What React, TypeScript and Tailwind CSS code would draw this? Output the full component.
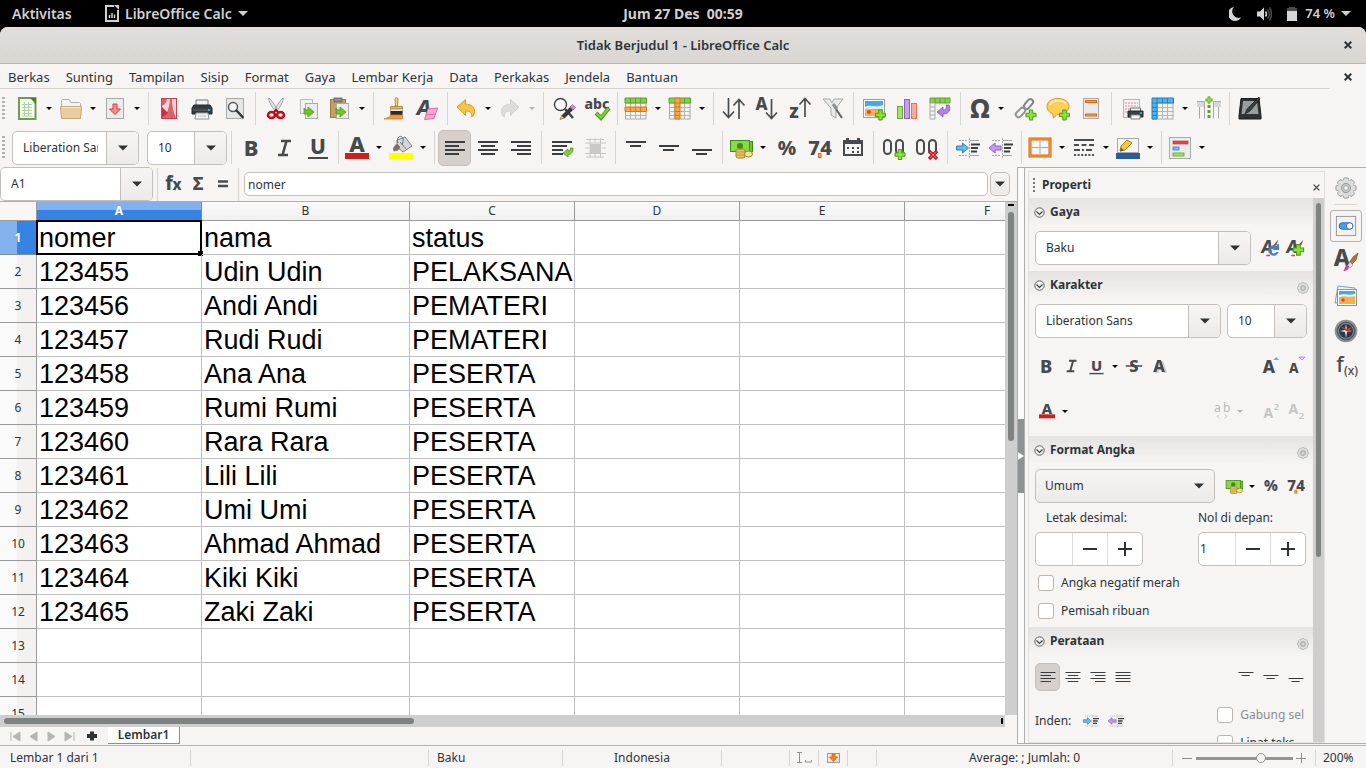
import React from "react";

type Kids = { children?: React.ReactNode };

const Ico = ({ children, s = 24 }: Kids & { s?: number }) => (
  <svg width={s} height={s} viewBox="0 0 24 24" fill="none" className="block shrink-0 overflow-visible" aria-hidden="true">
    {children}
  </svg>
);

const Glyph = ({ x = 12, y = 20, size = 20, weight = 800, fill = "#474a4c", italic = false, children }: Kids & {
  x?: number; y?: number; size?: number; weight?: number; fill?: string; italic?: boolean;
}) => (
  <text x={x} y={y} fontSize={size} fontWeight={weight} fill={fill} fontStyle={italic ? "italic" : "normal"} textAnchor="middle" fontFamily="'Noto Sans', sans-serif">
    {children}
  </text>
);

const Caret = ({ muted = false }: { muted?: boolean }) => (
  <svg width="6" height="3" viewBox="0 0 6 3" className="block" aria-hidden="true">
    <path d="M0 0h6L3 3z" fill={muted ? "#b4b4b4" : "#000"} />
  </svg>
);

const BigCaret = () => (
  <svg width="10" height="6" viewBox="0 0 10 6" className="block" aria-hidden="true">
    <path d="M0 .5h10L5 5.5z" fill="#2e3436" />
  </svg>
);

const Plus = ({ x, y, u = 1 }: { x: number; y: number; u?: number }) => (
  <path transform={`translate(${x} ${y}) scale(${u})`} d="M-1.7-5h3.4v3.3H5v3.4H1.7V5h-3.4V1.7H-5v-3.4h3.3z" fill="#8ae234" stroke="#4f9a17" strokeWidth="1" />
);

/* toolbar icons */
const NewSheet = () => (
  <Ico>
    <rect x="4" y="1" width="16.500" height="21" fill="#f6fbf1" stroke="#6f9b55" strokeWidth="2" />
    <path d="M15 1h6v6z" fill="#4d7a33" />
    <path d="M7 7.500h10M7 10.500h10M7 13.500h10M7 16.500h10M7 19h10M9.500 5v14M13.500 5v14" stroke="#b5cfa5" />
  </Ico>
);
const Folder = () => (
  <Ico>
    <path d="M2.500 21V3.500l1-1h7l1 3h9l1 1V21z" fill="#f4f4f3" stroke="#b0b0ae" />
    <path d="M1.500 9.500h21L21.500 21.500h-19z" fill="#e8cda3" stroke="#c9a775" />
    <path d="M2.500 10.500h19" stroke="#f7e8cd" />
  </Ico>
);
const Save = () => (
  <Ico>
    <rect x="3.500" y="1.500" width="17" height="20" fill="#ececec" stroke="#a6a8a8" />
    <path d="M10 7h4v5h3.500L12 17.500 6.500 12H10z" fill="#f58a8a" stroke="#d43b4b" />
  </Ico>
);
const Pdf = () => (
  <Ico>
    <rect x="4.500" y="1.500" width="15" height="20" fill="#d8636d" stroke="#c44450" />
    <path d="M5 21C10 17 12 13 13 2h-3C9 6 8 7 5 9zM15 2c0 6 1 13 4 19V2z" fill="#f5d3d5" />
    <path d="M5 10l6 6-6 5z" fill="#c8323f" />
  </Ico>
);
const Printer = () => (
  <Ico>
    <path d="M6 9V3h12v6" fill="#f2f2f2" stroke="#73797c" />
    <path d="M4 8h16l2 3v6H2v-6z" fill="#363b3f" stroke="#23272a" />
    <path d="M3 13h18" stroke="#5f666b" />
    <circle cx="19" cy="13" r="1" fill="#43c4d8" />
    <path d="M6 16h12l1 6H5z" fill="#f5f5f5" stroke="#909496" />
    <path d="M8 19h8" stroke="#bbb" />
  </Ico>
);
const Preview = () => (
  <Ico>
    <rect x="3.500" y="1.500" width="17" height="20" fill="#e5e6e6" stroke="#a9abab" />
    <circle cx="10" cy="10" r="4.500" fill="#f4f4f4" stroke="#555a5c" strokeWidth="1.500" />
    <path d="M13.500 13.500l6 6.500" stroke="#33373a" strokeWidth="2.500" strokeLinecap="round" />
  </Ico>
);
const Cut = () => (
  <Ico>
    <path d="M5 1c-1 3 3 9 6 13l2-2C11 8 7 3 5 1zM19 1c1 3-3 9-6 13l-2-2C13 8 17 3 19 1z" fill="#e2e5e5" stroke="#8a8f90" strokeWidth=".8" />
    <ellipse cx="7.500" cy="18" rx="3.500" ry="3" stroke="#c00d1c" strokeWidth="2.600" />
    <ellipse cx="16.500" cy="18" rx="3.500" ry="3" stroke="#c00d1c" strokeWidth="2.600" />
    <path d="M10 15l2-2 2 2" stroke="#a50c18" strokeWidth="2" />
  </Ico>
);
const GreenArrow = ({ x, y }: { x: number; y: number }) => (
  <path transform={`translate(${x} ${y})`} d="M0 0v6h4v3l6-5-6-5v3H1z" fill="#73c52b" stroke="#4b9612" strokeWidth=".8" />
);
const Copy = () => (
  <Ico>
    <rect x="3.500" y="2.500" width="12" height="14" fill="#f3f3f2" stroke="#b9bbbb" />
    <rect x="8.500" y="6.500" width="12" height="15" fill="#ebebea" stroke="#aaacac" />
    <GreenArrow x={7} y={11} />
  </Ico>
);
const Paste = () => (
  <Ico>
    <rect x="2.500" y="2.500" width="15" height="18" fill="#c79f63" stroke="#9d7a42" />
    <rect x="6" y="1" width="8" height="4" fill="#8d8f8e" stroke="#5e6060" strokeWidth=".8" />
    <rect x="8.500" y="6.500" width="12" height="15" fill="#ececeb" stroke="#aaacac" />
    <GreenArrow x={8} y={11} />
  </Ico>
);
const Brush = () => (
  <Ico>
    <path d="M13 1.500a2 2 0 0 1 3 0L15.500 9h-2z" fill="#f3d38c" stroke="#bb8c37" />
    <path d="M8.500 12V9.500h12V12z" fill="#e8b659" stroke="#bb8c37" />
    <path d="M8.500 12h12v4h-12z" fill="#e9e9e9" stroke="#999" strokeWidth=".7" />
    <path d="M8.500 14h12v4h-12z" fill="#2e2b28" />
    <path d="M8.500 18h12v4H2l5-2z" fill="#f2994a" stroke="#dc7a21" strokeWidth=".7" />
  </Ico>
);
const ClearFmt = () => (
  <Ico>
    <Glyph x={9} y={18} size={22} italic>A</Glyph>
    <path d="M13 12l9.500-1L19 21.500l-9.500 1z" fill="#f9a8cf" stroke="#e56aa5" strokeLinejoin="round" />
    <path d="M11 18l9.500-1" stroke="#e56aa5" />
  </Ico>
);
const Undo = ({ muted = false }: { muted?: boolean }) => (
  <Ico>
    <path
      transform={muted ? "matrix(-1 0 0 1 24 0)" : undefined}
      d="M3 10l8.500-7.500v4.700c6 0 9 3 9 7.300 0 2.500-1 4.500-3 5.500.8-4-1-6-6-6v4.500z"
      fill={muted ? "#dcdcdb" : "#f6c24a"} stroke={muted ? "#d0d0cf" : "#d49a22"} strokeLinejoin="round" />
  </Ico>
);
const Find = () => (
  <Ico>
    <circle cx="8.500" cy="7.500" r="6" fill="#fafafa" stroke="#3f4446" strokeWidth="1.400" />
    <path d="M13 12l8 9" stroke="#3f4446" strokeWidth="2.500" />
    <path d="M9 22l1-4L19 9l3 3-9 9z" fill="#383a3c" />
    <path d="M18 10l2.500-2.500 3 3L21 13z" fill="#c98bd0" stroke="#945c9b" strokeWidth=".6" />
    <path d="M8 22.500l1.500-4 3 2.500z" fill="#f0dd6b" stroke="#45401c" strokeWidth=".5" />
  </Ico>
);
const Spell = () => (
  <Ico>
    <Glyph y={12} size={14}>abc</Glyph>
    <path d="M11 16l5 5 8-10" stroke="#4d9a18" strokeWidth="4" />
    <path d="M11.500 16.500l4.500 4 7.500-9" stroke="#80d32f" strokeWidth="2" />
  </Ico>
);
const gridLines = "M6.500 1v21M11.500 1v21M16.500 1v21M1.500 6h21M1.500 10.500h21M1.500 14.500h21M1.500 18.500h21";
const RowIcon = () => (
  <Ico>
    <rect x="1.500" y="1.500" width="20.500" height="20.500" fill="#f2f3f2" stroke="#a9abaa" />
    <path d={gridLines} stroke="#b4b6b5" />
    <path d="M1 1h21.500v5H1z" fill="#86cf4d" stroke="#5ea02d" />
    <path d="M6.500 1v5M11.500 1v5M16.500 1v5" stroke="#5ea02d" />
    <path d="M1 10h21.500v4.500H1z" fill="#f9a646" stroke="#d97a14" />
    <path d="M6.500 10v4M11.500 10v4M16.500 10v4" stroke="#d97a14" />
  </Ico>
);
const ColIcon = () => (
  <Ico>
    <rect x="1.500" y="1.500" width="20.500" height="20.500" fill="#f2f3f2" stroke="#a9abaa" />
    <path d={gridLines} stroke="#b4b6b5" />
    <path d="M1 1h21.500v5H1z" fill="#86cf4d" stroke="#5ea02d" />
    <path d="M16.500 1v5" stroke="#5ea02d" />
    <path d="M7 1h5v21H7z" fill="#f9a646" stroke="#d97a14" />
    <path d="M7 6h5M7 10h5M7 14.500h5M7 18.500h5" stroke="#d97a14" />
  </Ico>
);
const ink = "#4a4d4f";
const Sort = () => (
  <Ico>
    <path d="M6.500 1v19M1 14.500l5.500 6 5.500-6M17 22V3M11.500 8.500l5.500-6 5.500 6" stroke={ink} strokeWidth="1.700" />
  </Ico>
);
const SortAsc = () => (
  <Ico>
    <Glyph x={6.5} y={13} size={17}>A</Glyph>
    <path d="M16.500 2v19M11 15.500l5.500 6 5.500-6" stroke={ink} strokeWidth="1.700" />
  </Ico>
);
const SortDesc = () => (
  <Ico>
    <Glyph x={6} y={21} size={19}>z</Glyph>
    <path d="M17 20V2M11.500 7.500l5.500-6 5.500 6" stroke={ink} strokeWidth="1.700" />
  </Ico>
);
const Filter = () => (
  <Ico>
    <path d="M2 2h7l2 4 2-4h9l-7 9v10l-5-3v-7z" fill="#e9eaea" stroke="#a4a8a8" />
    <path d="M13 9l8 12" stroke="#5d6263" strokeWidth="2" />
    <path d="M12 7l4 5" stroke="#8d9293" strokeWidth="3" />
  </Ico>
);
const Picture = () => (
  <Ico>
    <rect x="1.500" y="2.500" width="21" height="18" fill="#fdfdfd" stroke="#9c9fa0" />
    <rect x="3" y="4" width="18" height="9" fill="#46a9e6" />
    <path d="M3 10c5-3 9 1 18-2v4H3z" fill="#d9effa" />
    <path d="M3 12c6-1 9 2 18 0v7H3z" fill="#f7b04e" />
    <circle cx="7" cy="15" r="2" fill="#e4472b" />
    <Plus x={18.5} y={18} />
  </Ico>
);
const Chart = () => (
  <Ico>
    <rect x="2.500" y="9.500" width="5" height="12" fill="#a6e36d" stroke="#67ad2f" />
    <rect x="9.500" y="2.500" width="5" height="19" fill="#c79df0" stroke="#9360c9" />
    <rect x="16.500" y="6.500" width="5" height="15" fill="#f7a99a" stroke="#df7565" />
  </Ico>
);
const Pivot = () => (
  <Ico>
    <path d="M2 1h20v5H2z" fill="#86cf4d" stroke="#5ea02d" />
    <path d="M7 1v5M12 1v5M17 1v5" stroke="#5ea02d" />
    <path d="M2 6h5v16H2zM2 10h5M2 14h5M2 18h5" fill="#f2f3f2" stroke="#a9abaa" />
    <path d="M9 15l6-5v3c3 0 4-2 3-5h3c2 5 0 9-6 9v3z" fill="#b184e3" stroke="#8450be" strokeWidth=".8" strokeLinejoin="round" />
  </Ico>
);
const Omega = () => (
  <Ico><Glyph x={13} y={21} size={26}>Ω</Glyph></Ico>
);
const Link = () => (
  <Ico>
    <rect x="-5.500" y="-2.800" width="11" height="5.600" rx="2.800" transform="translate(15.500 7) rotate(-50)" stroke="#7f8485" strokeWidth="2" />
    <rect x="-5.500" y="-2.800" width="11" height="5.600" rx="2.800" transform="translate(7.500 15.500) rotate(-45)" stroke="#8f9495" strokeWidth="2" />
    <Plus x={18} y={18} />
  </Ico>
);
const Comment = () => (
  <Ico>
    <path d="M12 1.500c7 0 11 3.500 11 8s-4 8-11 8l-1-.1-3.500 3.800-.8-4.500C3 15.500 1 13 1 9.500c0-4.500 4-8 11-8z" fill="#fbce58" stroke="#d89c26" />
    <path d="M4 8c1-3 4-4.500 8-4.500s7 1.500 8 4" stroke="#fde9a9" strokeWidth="2" />
    <Plus x={18.5} y={18} />
  </Ico>
);
const HeaderFooter = () => (
  <Ico>
    <rect x="4.500" y="1.500" width="15" height="20" fill="#e9eaea" stroke="#a9abab" />
    <rect x="6.500" y="3.500" width="11" height="2" fill="#fba45c" stroke="#d9660a" />
    <rect x="6.500" y="17" width="11" height="2" fill="#fba45c" stroke="#d9660a" />
  </Ico>
);
const PrintArea = () => (
  <Ico>
    <rect x="3.500" y="2.500" width="16" height="18" fill="#f3f3f3" stroke="#b3b5b5" />
    <path d="M5 6h13M5 9h13M5 12h13M5 15h5" stroke="#c88a93" strokeDasharray="2 1" />
    <path d="M10.500 11h10v4h-10z" fill="#f4f4f4" stroke="#6c7072" />
    <path d="M8 14h15v6H8z" fill="#3a3f42" stroke="#25292b" />
    <path d="M11 18h9v4h-9z" fill="#fafafa" stroke="#7c8082" />
    <circle cx="21" cy="16" r="1" fill="#43c4d8" />
  </Ico>
);
const Freeze = () => (
  <Ico>
    <rect x="1.500" y="1.500" width="20.500" height="20.500" fill="#f2f3f2" stroke="#a9abaa" />
    <path d={gridLines} stroke="#b4b6b5" />
    <path d="M1 1h21.500v5H6v16H1z" fill="#57b0ea" stroke="#1f7fc0" />
    <path d="M6 6V1M11.500 6V1M16.500 6V1M1 10.500h5M1 14.500h5M1 18.500h5M1 6h5" stroke="#1f7fc0" />
  </Ico>
);
const Split = () => (
  <Ico>
    <path d="M0 4.500h7.500v17M2.500 4.500v17M24 4.500h-7.500v17M21.500 4.500v17" stroke="#a6a9a9" />
    <rect x="0" y="5" width="7" height="5" fill="#d7d9d9" />
    <rect x="17" y="5" width="7" height="5" fill="#d7d9d9" />
    <path d="M12 8v14" stroke="#5aa526" strokeWidth="3" strokeDasharray="3 2" />
    <Plus x={12} y={3} u={0.65} />
  </Ico>
);
const Tablet = () => (
  <Ico>
    <path d="M3 1.500h18l2 17v3.500H1v-3.500z" fill="#2f3133" stroke="#1c1d1e" />
    <path d="M5 4h14l1.500 13h-17z" fill="#9a9d9e" />
    <path d="M21 0L9 12l-2 5 5-3L22 2z" fill="#3a3c3d" stroke="#111" strokeWidth=".6" />
  </Ico>
);

const BoldG = ({ s = 24 }: { s?: number }) => <Ico s={s}><Glyph x={11} y={20} size={22}>B</Glyph></Ico>;
const ItalicG = ({ s = 24 }: { s?: number }) => (
  <Ico s={s}><path d="M8 5h10M5 19h10M13.500 5l-4 14" stroke="#474a4c" strokeWidth="2.600" /></Ico>
);
const UnderG = ({ s = 24 }: { s?: number }) => (
  <Ico s={s}><Glyph y={18} size={21}>U</Glyph><path d="M2 22h20" stroke="#474a4c" strokeWidth="2" /></Ico>
);
const ColorG = ({ s = 24 }: { s?: number }) => (
  <Ico s={s}><rect x="0" y="17" width="24" height="6" fill="#c9211e" /><Glyph y={16} size={22}>A</Glyph></Ico>
);
const Bucket = () => (
  <Ico>
    <path d="M8 4l8-3 7 9-9 6-6-5z" fill="#d5d8da" stroke="#7d8284" />
    <path d="M11 6l7 8M8 8c-3 2-4 4-3 7l4-1 2-3z" stroke="#777c7e" fill="#8d6a55" />
    <path d="M9 7c-2-5 2-8 4-6s1 5 0 8" stroke="#6a6f71" />
    <rect x="0" y="17" width="24" height="6" fill="#ff0" />
  </Ico>
);

type LineSet = [number, number][];
const Lines = ({ rows, y0, s = 24, w = 2, gap = 4 }: { rows: LineSet; y0: number; s?: number; w?: number; gap?: number }) => (
  <Ico s={s}>
    {rows.map(([a, b], i) => (
      <path key={i} d={`M${a} ${y0 + i * gap}H${b}`} stroke="#3b3e40" strokeWidth={w} />
    ))}
  </Ico>
);
const leftRows: LineSet = [[2, 22], [2, 16], [2, 22], [2, 16]];
const centerRows: LineSet = [[2, 22], [5, 19], [2, 22], [5, 19]];
const rightRows: LineSet = [[2, 22], [8, 22], [2, 22], [8, 22]];
const fullRows: LineSet = [[2, 22], [2, 22], [2, 22], [2, 22]];
const twoRows: LineSet = [[2, 22], [6, 17]];

const Wrap = () => (
  <Ico>
    <path d="M2 6h20M2 10h15M2 14h11M2 18h11" stroke="#3b3e40" strokeWidth="2" />
    <path d="M13 17l5-4v2c2 0 2.500-1 2.500-3H23c0 4-1.500 6.500-5 6.500v2.500z" fill="#80cf3d" stroke="#4f9a1d" strokeWidth=".8" />
  </Ico>
);
const MergeG = () => (
  <Ico>
    <rect x="7" y="8" width="11" height="9" fill="#c9c9c8" />
    <path d="M7 2v20M12 2v4M12 18v4M17.500 2v20M2 7h21M2 12h4M19 12h4M2 17.500h21M3 3.500h18M3 21h18" stroke="#c7c7c6" />
  </Ico>
);
const Money = ({ s = 24 }: { s?: number }) => (
  <Ico s={s}>
    <rect x="4.500" y="5.500" width="19" height="10" fill="#73c336" stroke="#3f8c12" />
    <rect x="1.500" y="4.500" width="19" height="11" fill="#8ad84f" stroke="#3f8c12" />
    <circle cx="11" cy="10" r="3" fill="#3f8c12" />
    <rect x="7" y="13" width="9" height="9" rx="2" fill="#e9c765" stroke="#a5802a" />
    <path d="M8 16h7M8 19h7" stroke="#b48f35" />
    <ellipse cx="19.500" cy="18" rx="4" ry="3" fill="#f5e194" stroke="#a5802a" />
  </Ico>
);
const Percent = ({ s = 24 }: { s?: number }) => <Ico s={s}><Glyph y={19} size={20}>%</Glyph></Ico>;
const Number74 = ({ s = 24 }: { s?: number }) => (
  <Ico s={s}>
    <Glyph x={6} y={19} size={20}>7</Glyph>
    <Glyph x={18} y={19} size={20}>4</Glyph>
    <rect x="10.500" y="17.500" width="2.500" height="4" fill="#f8b27a" stroke="#e2620f" />
  </Ico>
);
const Calendar = () => (
  <Ico>
    <rect x="3" y="6" width="18" height="13" stroke="#474a4c" strokeWidth="2" />
    <path d="M2 4h20v4H2zM5 2h3v4H5zM16 2h3v4h-3z" fill="#474a4c" />
    <path d="M6 12h2M11 12h2M16 12h2M11 16h2M16 16h2" stroke="#474a4c" strokeWidth="2" />
  </Ico>
);
const Zeros = () => (
  <>
    <rect x="2" y="4" width="7" height="14" rx="3.500" stroke={ink} strokeWidth="2" />
    <rect x="14" y="4" width="7" height="14" rx="3.500" stroke={ink} strokeWidth="2" />
  </>
);
const AddDec = () => <Ico><Zeros /><Plus x={18} y={18.500} /></Ico>;
const DelDec = () => (
  <Ico>
    <Zeros />
    <path d="M14 15l8 8M22 15l-8 8" stroke="#c61f2c" strokeWidth="3.500" />
    <path d="M15 16l6 6M21 16l-6 6" stroke="#ef6b73" strokeWidth="1" />
  </Ico>
);
const Indent = ({ back = false, s = 24 }: { back?: boolean; s?: number }) => (
  <Ico s={s}>
    <path d="M3 4.500h8M3 19.500h8M13.500 2v20" stroke="#a3a6a7" strokeDasharray="2 1" />
    <path d="M14 4.500h9M14 19.500h9" stroke="#a3a6a7" />
    <path d="M15 8.500h9M15 12h7M15 15.500h6" stroke="#3b3e40" strokeWidth="2" />
    {back
      ? <path d="M0 12l6-5v3h6v4H6v3z" fill="#c29aee" stroke="#8f5ec9" />
      : <path d="M12.500 12l-6-5v3H.5v4h6v3z" fill="#6cb8e6" stroke="#2f7fb4" />}
  </Ico>
);
const Borders = () => (
  <Ico>
    <rect x="2" y="3" width="20" height="17" fill="#f5f6f6" stroke="#d9660a" strokeWidth="3" />
    <rect x="2" y="3" width="20" height="17" stroke="#fba54b" strokeWidth="1" />
    <path d="M12 5v13M4 11.500h16" stroke="#a9abab" />
  </Ico>
);
const BorderStyle = () => (
  <Ico>
    <path d="M2 4h20" stroke={ink} strokeWidth="2" />
    <path d="M2 9h20" stroke={ink} strokeWidth="2" strokeDasharray="5 2.500" />
    <path d="M2 14h20" stroke={ink} strokeWidth="2" strokeDasharray="6 2 2 2" />
    <path d="M2 19h20" stroke={ink} strokeWidth="2" strokeDasharray="2 1.600" />
  </Ico>
);
const BorderColor = () => (
  <Ico>
    <rect x="1.500" y="2.500" width="21" height="14" fill="#f6f6f6" stroke="#a6a9a9" />
    <path d="M4 15l1-5 6-6 5 3-7 7z" fill="#f3c93d" stroke="#a9841a" />
    <path d="M4 15.500l1-4 3 3z" fill="#5b5e60" />
    <rect x="0" y="17" width="24" height="6" fill="#2a5b9c" />
  </Ico>
);
const Conditional = () => (
  <Ico>
    <rect x="1.500" y="1.500" width="21" height="21" fill="#eaebeb" stroke="#a9abab" />
    <rect x="5" y="5" width="15" height="3" fill="#e2474f" stroke="#b92b35" strokeWidth=".6" />
    <rect x="5" y="11" width="6" height="3" fill="#76bdf0" stroke="#2e82bd" strokeWidth=".8" />
    <rect x="5" y="17" width="11" height="3" fill="#a4e26b" stroke="#5ba325" strokeWidth=".8" />
  </Ico>
);

/* sidebar icons */
const Gear = ({ s }: { s: number }) => (
  <Ico s={s}>
    {[0, 45, 90, 135].map((a) => (
      <rect key={a} x="9.200" y="1" width="5.600" height="22" rx="1.500" transform={`rotate(${a} 12 12)`} fill="#dcdddd" stroke="#8f9293" />
    ))}
    <circle cx="12" cy="12" r="8.800" fill="#dcdddd" />
    <circle cx="12" cy="12" r="5" fill="#c6c8c8" stroke="#8f9293" />
    <circle cx="12" cy="12" r="2.500" fill="#f6f5f4" stroke="#8f9293" strokeWidth=".8" />
  </Ico>
);
const Fold = () => (
  <svg width="11" height="11" viewBox="0 0 11 11" fill="none" className="block" aria-hidden="true">
    <circle cx="5.500" cy="5.500" r="4.700" stroke="#5d6163" fill="#f0f0ef" />
    <path d="M2.500 4.500l3 3 3-3" stroke="#3c4042" strokeWidth="1.200" />
  </svg>
);
const PropTab = () => (
  <Ico s={22}>
    <rect x="1.500" y="1.500" width="21" height="21" fill="#f2f2f2" stroke="#8f9293" />
    <rect x="4.500" y="8.500" width="15" height="7" rx="3.500" fill="#4f9be8" stroke="#2669b5" />
    <circle cx="16" cy="12" r="3.500" fill="#fff" stroke="#2669b5" />
  </Ico>
);
const StylesTab = () => (
  <Ico>
    <Glyph x={8} y={17} size={23}>A</Glyph>
    <path d="M24 4l-2 7-5 5-2-2 4-6z" fill="#b87438" stroke="#7c4a1e" strokeWidth=".7" />
    <path d="M16 13l3 3-3 3-3-2z" fill="#dfe1e1" stroke="#888" strokeWidth=".6" />
    <path d="M15 17c0 4-3 5-6 5 2-1 1-4 4-6z" fill="#c43fa8" />
  </Ico>
);
const GalleryTab = () => (
  <Ico>
    <path d="M4 2l17 2v14L1 19z" fill="#e8f2f6" stroke="#7ca3b5" />
    <rect x="3.500" y="5.500" width="19" height="16" fill="#fdfdfd" stroke="#8f9293" />
    <rect x="5" y="7" width="16" height="6" fill="#46a9e6" />
    <path d="M5 12c6-2 9 1 16-1v9H5z" fill="#f7b04e" />
    <path d="M5 11c6-2 9 1 16-1v2c-7 2-10-1-16 1z" fill="#eef8fc" />
    <circle cx="9" cy="16" r="1.700" fill="#e4472b" />
  </Ico>
);
const NavTab = () => (
  <Ico>
    <circle cx="12" cy="12" r="10.300" fill="#4b5864" stroke="#8b9092" strokeWidth="2" />
    <circle cx="12" cy="12" r="7.500" fill="#2f3a44" stroke="#b8bdc0" strokeWidth=".6" />
    <path d="M12 5l1 6 5 1-5 1-1 6-1-6-5-1 5-1z" fill="#e9ecee" />
    <path d="M6 7l7 3 5-2-3 5-3-1z" fill="#d5303a" />
  </Ico>
);
const StyleA = ({ plus = false }: { plus?: boolean }) => (
  <Ico s={18}>
    <path d="M23 1l-2 6-6 7-2-2z" fill="#8a5530" />
    <Glyph x={8} y={18} size={23} italic>A</Glyph>
    <path d="M7 22h5" stroke="#c43fa8" strokeWidth="2" />
    {plus ? <Plus x={16.5} y={14.500} u={1.400} /> : (
      <path d="M21 11.500a5.500 5.500 0 1 0 1 6M22.500 7v6h-6" stroke="#3f7fd0" strokeWidth="3" />
    )}
  </Ico>
);

/* building blocks */
const Tool = ({ label, children, active = false }: Kids & { label: string; active?: boolean }) => (
  <button type="button" aria-label={label} className={active
    ? "flex h-9 w-[33px] shrink-0 items-center justify-center rounded-[5px] border border-[#c5c0bb] bg-[#d5d0cc]"
    : "flex h-9 w-[33px] shrink-0 items-center justify-center"}>{children}</button>
);
const Drop = ({ label, children, muted = false }: Kids & { label: string; muted?: boolean }) => (
  <div className="flex w-11 shrink-0 items-center">
    <button type="button" aria-label={label} className="flex h-9 w-[30px] items-center justify-center">{children}</button>
    <button type="button" aria-label={label + ", pilihan"} className="flex h-9 w-3.5 items-center justify-center"><Caret muted={muted} /></button>
  </div>
);
const Sep = () => (
  <div className="flex w-2 shrink-0 justify-center"><div className="h-[33px] w-px bg-[#d8d5d1]" /></div>
);
const Grip = () => (
  <div className="mr-[7px] ml-0.5 h-6 w-[3px] shrink-0 bg-[repeating-linear-gradient(to_bottom,#b5b3b0_0px,#b5b3b0_2px,transparent_2px,transparent_4px)]" />
);

const Combo = ({ label, value, className }: { label: string; value: string; className: string }) => (
  <div className={"flex h-[34px] shrink-0 overflow-hidden rounded-[5px] border border-[#c3bfba] bg-white " + className}>
    <input aria-label={label} defaultValue={value} className="mr-2 ml-2.5 w-0 min-w-0 flex-1 bg-transparent outline-none" />
    <button type="button" aria-label={label + ", daftar"} className="flex w-8 shrink-0 items-center justify-center border-l border-[#c3bfba] bg-linear-to-b from-[#f6f5f4] to-[#edebe9]"><BigCaret /></button>
  </div>
);

const Section = ({ title, gear = true, children, className }: Kids & { title: string; gear?: boolean; className: string }) => (
  <section className={"shrink-0 " + className}>
    <header className="flex h-7 items-center bg-linear-to-b from-[#e4e3e2] to-[#f6f5f4] pl-[5px]">
      <button type="button" className="flex items-center gap-[5px] font-bold"><Fold />{title}</button>
      {gear && <button type="button" aria-label={"Opsi " + title} className="mt-1.5 mr-1 ml-auto"><Gear s={12} /></button>}
    </header>
    {children}
  </section>
);

const Side = ({ label, children }: Kids & { label: string }) => (
  <button type="button" aria-label={label} className="flex h-7 w-[25px] shrink-0 items-center justify-center">{children}</button>
);
const SideCaret = ({ label, muted = false }: { label: string; muted?: boolean }) => (
  <button type="button" aria-label={label} className="flex h-7 w-3 shrink-0 items-center justify-center"><Caret muted={muted} /></button>
);

const Spin = ({ id, label, value, indent = false }: { id: string; label: string; value: string; indent?: boolean }) => (
  <div className="w-[108px]">
    <label htmlFor={id} className={indent ? "block h-[22px] pl-[11px] whitespace-nowrap" : "block h-[22px] whitespace-nowrap"}>{label}</label>
    <div className="flex h-[34px] overflow-hidden rounded-[5px] border border-[#c3bfba] bg-white">
      <input id={id} defaultValue={value} className="w-0 min-w-0 flex-1 bg-transparent pl-px outline-none" />
      <button type="button" aria-label="Kurangi" className="flex w-[35px] items-center justify-center border-l border-[#dedbd8]">
        <svg width="14" height="14" viewBox="0 0 14 14"><path d="M0 7h14" stroke="#2e3436" strokeWidth="2" /></svg>
      </button>
      <button type="button" aria-label="Tambah" className="flex w-[35px] items-center justify-center border-l border-[#dedbd8]">
        <svg width="14" height="14" viewBox="0 0 14 14"><path d="M0 7h14M7 0v14" stroke="#2e3436" strokeWidth="2" /></svg>
      </button>
    </div>
  </div>
);

const Check = ({ label, muted = false }: { label: string; muted?: boolean }) => (
  <label className={muted ? "flex h-7 items-center gap-[7px] whitespace-nowrap text-[#8b8e8f]" : "flex h-7 items-center gap-[7px] whitespace-nowrap"}>
    <input type="checkbox" disabled={muted} className="size-4 shrink-0 appearance-none rounded-[3px] border border-[#bab5b0] bg-white" />
    {label}
  </label>
);

const menus = ["Berkas", "Sunting", "Tampilan", "Sisip", "Format", "Gaya", "Lembar Kerja", "Data", "Perkakas", "Jendela", "Bantuan"];
const columns = ["A", "B", "C", "D", "E", "F"];
const records: string[][] = [
  ["nomer", "nama", "status"],
  ["123455", "Udin Udin", "PELAKSANA"],
  ["123456", "Andi Andi", "PEMATERI"],
  ["123457", "Rudi Rudi", "PEMATERI"],
  ["123458", "Ana Ana", "PESERTA"],
  ["123459", "Rumi Rumi", "PESERTA"],
  ["123460", "Rara Rara", "PESERTA"],
  ["123461", "Lili Lili", "PESERTA"],
  ["123462", "Umi Umi", "PESERTA"],
  ["123463", "Ahmad Ahmad", "PESERTA"],
  ["123464", "Kiki Kiki", "PESERTA"],
  ["123465", "Zaki Zaki", "PESERTA"],
  [], [], [],
];

const TopBar = () => (
  <div className="grid h-[27px] shrink-0 grid-cols-[1fr_auto_1fr] items-center bg-black text-sm font-semibold text-[#d0d0d0]">
    <div className="flex items-center pl-3">
      <button type="button" className="w-[93px] text-left">Aktivitas</button>
      <button type="button" className="flex items-center gap-1.5">
        <svg width="14" height="17" viewBox="0 0 14 17" fill="none" aria-hidden="true">
          <path d="M9 1H1v15h12V5" stroke="#d0d0d0" strokeWidth="2" />
          <path d="M9 0h5v5z" fill="#d0d0d0" />
          <path d="M4.500 13v-3M7 13V8M9.500 13V9.500" stroke="#d0d0d0" strokeWidth="1.500" />
        </svg>
        LibreOffice Calc
        <svg width="10" height="5" viewBox="0 0 10 5"><path d="M0 0h10L5 5z" fill="#d0d0d0" /></svg>
      </button>
    </div>
    <span className="font-bold whitespace-pre">Jum 27 Des  00:59</span>
    <div className="flex items-center justify-end pr-[15px]">
      <svg width="12" height="14" viewBox="0 0 12 14" className="mr-4" aria-hidden="true"><path d="M5 0a7 7 0 1 0 7 10.500A6.500 6.500 0 0 1 5 0z" fill="#d6d6d6" /></svg>
      <svg width="15" height="14" viewBox="0 0 15 14" fill="none" className="mr-[15px]" aria-hidden="true">
        <path d="M0 4.500h3L7 .5v13l-4-4H0z" fill="#d6d6d6" />
        <path d="M8.500 4.500q2 2.500 0 5" stroke="#d6d6d6" strokeWidth="1.500" />
        <path d="M10.500 2.500q4 4.500 0 9M12.500.5q4 6.500 0 13" stroke="#4a4a4a" strokeWidth="1.500" />
      </svg>
      <svg width="10" height="14" viewBox="0 0 10 14" className="mr-2" aria-hidden="true"><path d="M2 0h6v1h2v3H0V1h2z" fill="#4a4a4a" /><path d="M0 4h10v10H0z" fill="#d6d6d6" /></svg>
      <span className="mr-1.5 text-[13px]">74 %</span>
      <svg width="10" height="5" viewBox="0 0 10 5"><path d="M0 0h10L5 5z" fill="#d0d0d0" /></svg>
    </div>
  </div>
);

const Cross = ({ s = 8, w = 2 }: { s?: number; w?: number }) => (
  <svg width={s} height={s} viewBox="0 0 8 8" className="block" aria-hidden="true"><path d="M.7.7l6.600 6.600M7.300.7L.7 7.300" stroke="#2e3436" strokeWidth={w} /></svg>
);

const StandardBar = () => (
  <div className="flex h-[39px] shrink-0 items-center overflow-hidden">
    <Grip />
    <Drop label="Baru"><NewSheet /></Drop><Drop label="Buka"><Folder /></Drop><Drop label="Simpan"><Save /></Drop>
    <Sep />
    <Tool label="Ekspor PDF"><Pdf /></Tool><Tool label="Cetak"><Printer /></Tool><Tool label="Pratinjau"><Preview /></Tool>
    <Sep />
    <Tool label="Potong"><Cut /></Tool><Tool label="Salin"><Copy /></Tool><Drop label="Tempel"><Paste /></Drop>
    <Sep />
    <Tool label="Salin format"><Brush /></Tool><Tool label="Bersihkan format"><ClearFmt /></Tool>
    <Sep />
    <Drop label="Batal"><Undo /></Drop><Drop label="Ulangi" muted><Undo muted /></Drop>
    <Sep />
    <Tool label="Cari"><Find /></Tool><Tool label="Ejaan"><Spell /></Tool>
    <Sep />
    <Drop label="Baris"><RowIcon /></Drop><Drop label="Kolom"><ColIcon /></Drop>
    <Sep />
    <Tool label="Urutkan"><Sort /></Tool><Tool label="Urut naik"><SortAsc /></Tool><Tool label="Urut turun"><SortDesc /></Tool><Tool label="Saring"><Filter /></Tool>
    <Sep />
    <Tool label="Gambar"><Picture /></Tool><Tool label="Bagan"><Chart /></Tool><Tool label="Tabel pivot"><Pivot /></Tool>
    <Sep />
    <Drop label="Karakter khusus"><Omega /></Drop><Tool label="Taut"><Link /></Tool><Tool label="Komentar"><Comment /></Tool><Tool label="Kepala dan kaki"><HeaderFooter /></Tool>
    <Sep />
    <Tool label="Area cetak"><PrintArea /></Tool><Drop label="Bekukan"><Freeze /></Drop><Tool label="Pisah jendela"><Split /></Tool>
    <Sep />
    <Tool label="Fungsi gambar"><Tablet /></Tool>
  </div>
);

const FormatBar = () => (
  <div className="flex h-[39px] shrink-0 items-center overflow-hidden">
    <Grip />
    <Combo label="Nama fonta" value="Liberation Sans" className="w-[127px] text-xs" />
    <Combo label="Ukuran fonta" value="10" className="ml-2 w-20 text-xs" />
    <Sep />
    <Tool label="Tebal"><BoldG /></Tool><Tool label="Miring"><ItalicG /></Tool><Tool label="Garis bawah"><UnderG /></Tool>
    <Sep />
    <Drop label="Warna fonta"><ColorG /></Drop><Drop label="Warna latar"><Bucket /></Drop>
    <Sep />
    <Tool label="Rata kiri" active><Lines rows={leftRows} y0={6} /></Tool>
    <Tool label="Rata tengah"><Lines rows={centerRows} y0={6} /></Tool>
    <Tool label="Rata kanan"><Lines rows={rightRows} y0={6} /></Tool>
    <Sep />
    <Tool label="Lipat teks"><Wrap /></Tool><Tool label="Gabung sel"><MergeG /></Tool>
    <Sep />
    <Tool label="Rata atas"><Lines rows={twoRows} y0={6} /></Tool>
    <Tool label="Pusat vertikal"><Lines rows={twoRows} y0={10} /></Tool>
    <Tool label="Rata bawah"><Lines rows={twoRows} y0={14} /></Tool>
    <Sep />
    <Drop label="Mata uang"><Money /></Drop><Tool label="Persen"><Percent /></Tool><Tool label="Bilangan"><Number74 /></Tool><Tool label="Tanggal"><Calendar /></Tool>
    <Sep />
    <Tool label="Tambah desimal"><AddDec /></Tool><Tool label="Hapus desimal"><DelDec /></Tool>
    <Sep />
    <Tool label="Tambah inden"><Indent /></Tool><Tool label="Kurangi inden"><Indent back /></Tool>
    <Sep />
    <Drop label="Batas"><Borders /></Drop><Drop label="Gaya batas"><BorderStyle /></Drop><Drop label="Warna batas"><BorderColor /></Drop>
    <Sep />
    <Drop label="Kondisional"><Conditional /></Drop>
  </div>
);

const FormulaBar = () => (
  <div className="flex h-[34px] shrink-0 items-center">
    <Combo label="Kotak nama" value="A1" className="w-[153px] text-xs" />
    <Sep />
    <button type="button" aria-label="Wisaya fungsi" className="w-6 text-center"><Ico><Glyph x={8} y={18} size={19}>f</Glyph><Glyph x={16} y={18} size={15}>x</Glyph></Ico></button>
    <button type="button" aria-label="Jumlah" className="ml-px w-6"><Ico><Glyph y={18} size={18}>Σ</Glyph></Ico></button>
    <button type="button" aria-label="Formula" className="w-6"><Ico><path d="M8 9.500h10M8 14h10" stroke={ink} strokeWidth="2.500" /></Ico></button>
    <Sep />
    <input aria-label="Baris masukan" defaultValue="nomer" className="ml-0.5 h-6 min-w-0 flex-1 rounded-[5px] border border-[#c3bfba] bg-white px-[3px] text-xs outline-none" />
    <button type="button" aria-label="Bentangkan" className="mr-[7px] ml-0.5 flex h-6 w-5 items-center justify-center rounded-[5px] border border-[#c3bfba] bg-linear-to-b from-[#f6f5f4] to-[#edebe9]"><BigCaret /></button>
  </div>
);

const SheetGrid = () => (
  <div className="min-w-0 flex-1 overflow-hidden border-t border-[#aeaeae] bg-white">
    <table className="w-[1070px] table-fixed border-separate border-spacing-0">
      <colgroup>
        <col className="w-[37px]" /><col className="w-[165px]" /><col className="w-[208px]" /><col className="w-[165px]" />
        <col className="w-[165px]" /><col className="w-[165px]" /><col className="w-[165px]" />
      </colgroup>
      <thead>
        <tr className="h-[19px] text-xs leading-[18px]">
          <td className="border-r border-b border-[#989a9a] bg-[#f8f7f6] p-0" />
          {columns.map((c, i) => (
            <th key={c} scope="col" className={i === 0
              ? "border-r border-b border-[#7c8a9c] bg-[linear-gradient(to_bottom,#82b1ee_45%,#3584e4_45%)] p-0 font-bold text-white"
              : "border-r border-b border-[#989a9a] bg-linear-to-b from-[#fbfafa] to-[#f2f1f0] p-0 font-normal"}>{c}</th>
          ))}
        </tr>
      </thead>
      <tbody>
        {records.map((row, r) => (
          <tr key={r} className="h-[34px]">
            <th scope="row" className={r === 0
              ? "border-r border-b border-[#7c8a9c] bg-[linear-gradient(to_right,#82b1ee_47%,#3584e4_47%)] p-0 text-xs font-bold text-white"
              : "border-r border-b border-[#989a9a] bg-[linear-gradient(to_right,#fafafa_47%,#f3f2f1_47%)] p-0 text-xs font-normal"}>{r + 1}</th>
            {columns.map((c, i) => (
              <td key={c} className="relative border-r border-b border-[#c0c0c0] p-0 pl-0.5 font-['Liberation_Sans',sans-serif] text-[27px] leading-8 whitespace-nowrap text-black">
                {row[i]}
                {r === 0 && i === 0 && (
                  <span className="absolute -top-px -right-px -bottom-px -left-px border-2 border-black">
                    <span className="absolute -right-[3px] -bottom-[3px] size-[5px] bg-black" />
                  </span>
                )}
              </td>
            ))}
          </tr>
        ))}
      </tbody>
    </table>
  </div>
);

const navPaths = ["M1 1v9M10 1v9L3 5.500z", "M9 1v9L2 5.500z", "M2 1v9l7-4.500z", "M10 1v9M1 1v9l7-4.500z"];

const SheetTabs = () => (
  <div className="flex h-[18px] shrink-0 items-center">
    <div className="flex gap-[7px] pl-2.5">
      {navPaths.map((d, i) => (
        <button key={i} type="button" aria-label={["Pertama", "Sebelumnya", "Berikutnya", "Terakhir"][i]}>
          <svg width="11" height="11" viewBox="0 0 11 11" className="block"><path d={d} fill="#b4b6b5" stroke="#b4b6b5" strokeWidth="1" /></svg>
        </button>
      ))}
    </div>
    <button type="button" aria-label="Sisipkan lembar" className="ml-3">
      <svg width="10" height="10" viewBox="0 0 10 10" className="block"><path d="M3 .5h4V3h3v4H7v2.500H3V7H0V3h3z" fill="#2e3436" /></svg>
    </button>
    <button type="button" className="ml-[11px] h-[17px] w-[72px] self-start border-r border-b border-[#8e9090] bg-white text-xs leading-4 font-semibold">Lembar1</button>
  </div>
);

const LineIcon = ({ rows, y0 }: { rows: LineSet; y0: number }) => <Lines rows={rows} y0={y0} s={18} w={1.4} />;

const Sidebar = () => (
  <aside className="flex w-[341px] shrink-0 pt-[3px] pl-[3px] text-xs leading-4">
    <div className="flex w-[297px] shrink-0 flex-col border border-[#e3e1df]">
      <div className="flex h-[26px] shrink-0 items-center pr-1 pl-1 font-bold">
        <div className="mr-[7px] h-[14px] w-0.5 bg-[repeating-linear-gradient(to_bottom,#777_0px,#777_2px,transparent_2px,transparent_4px)]" />
        Properti
        <button type="button" aria-label="Tutup bilah sisi" className="mt-1 ml-auto"><Cross s={7} w={1.2} /></button>
      </div>
      <div className="flex min-h-0 flex-1">
        <div className="flex w-[284px] shrink-0 flex-col overflow-hidden">
          <Section title="Gaya" gear={false} className="h-[73px]">
            <div className="flex items-center pt-[5px] pl-1.5">
              <Combo label="Gaya sel" value="Baku" className="mr-1.5 w-[216px]" />
              <Side label="Perbarui gaya"><StyleA /></Side><Side label="Gaya baru"><StyleA plus /></Side>
            </div>
          </Section>
          <Section title="Karakter" className="h-[165px]">
            <div className="flex gap-[6px] pt-[5px] pl-1.5">
              <Combo label="Fonta" value="Liberation Sans" className="w-[186px]" />
              <Combo label="Ukuran" value="10" className="w-20" />
            </div>
            <div className="mt-[14px] flex pr-[5px] pl-[5px]">
              <Side label="Tebal"><BoldG s={20} /></Side><Side label="Miring"><ItalicG s={18} /></Side>
              <Side label="Garis bawah"><UnderG s={17} /></Side><SideCaret label="Jenis garis" />
              <Side label="Coret"><Ico s={18}><Glyph y={20} size={22}>S</Glyph><path d="M1 12h22" stroke="#474a4c" strokeWidth="2" /></Ico></Side>
              <Side label="Bayangan"><span className="block drop-shadow-[2px_1px_0_#c9cacb]"><Ico s={18}><Glyph y={20} size={22}>A</Glyph></Ico></span></Side>
              <span className="flex-1" />
              <Side label="Perbesar"><Ico s={18}><Glyph x={9} y={21} size={23}>A</Glyph><path d="M15 4l4-4 4 4z" fill="#6cb0ea" /></Ico></Side>
              <Side label="Perkecil"><Ico s={18}><Glyph x={9} y={21} size={18}>A</Glyph><path d="M16 0h8l-4 4z" fill="#e6d3f7" stroke="#a678d8" /></Ico></Side>
            </div>
            <div className="mt-[17px] flex pr-[5px] pl-[5px]">
              <Side label="Warna fonta"><ColorG s={16} /></Side><SideCaret label="Pilih warna" />
              <span className="flex-1" />
              <Side label="Spasi"><Ico s={16}><Glyph x={5} y={14} size={18} weight={400} fill="#b9babb">a</Glyph><Glyph x={19} y={14} size={18} weight={400} fill="#b9babb">b</Glyph><path d="M8 17l-3 3 3 3M16 17l3 3-3 3" stroke="#c3c4c4" strokeWidth="1.500" /></Ico></Side>
              <SideCaret label="Pilih spasi" muted />
              <span className="w-3" />
              <Side label="Superskrip"><Ico s={16}><Glyph x={8} y={22} size={21} weight={700} fill="#c4c5c5">A</Glyph><Glyph x={20} y={11} size={14} weight={600} fill="#c4c5c5">2</Glyph></Ico></Side>
              <Side label="Subskrip"><Ico s={16}><Glyph x={8} y={17} size={21} weight={700} fill="#c4c5c5">A</Glyph><Glyph x={20} y={24} size={14} weight={600} fill="#c4c5c5">2</Glyph></Ico></Side>
            </div>
          </Section>
          <Section title="Format Angka" className="h-[191px]">
            <div className="flex items-center pt-[5px] pl-1.5">
              <div className="relative mr-1.5 h-[34px] w-[180px]">
                <select aria-label="Kategori" className="size-full appearance-none rounded-[5px] border border-[#c3bfba] bg-linear-to-b from-[#f6f5f4] to-[#edebe9] pl-[9px] outline-none"><option>Umum</option></select>
                <span className="pointer-events-none absolute top-[14px] right-[11px]"><BigCaret /></span>
              </div>
              <Side label="Mata uang"><Money s={18} /></Side><SideCaret label="Pilih mata uang" />
              <Side label="Persen"><Percent s={18} /></Side><Side label="Bilangan"><Number74 s={18} /></Side>
            </div>
            <div className="flex justify-between pt-[7px] pr-[7px] pl-1.5">
              <Spin id="decimals" label="Letak desimal:" value="" indent />
              <Spin id="zeroes" label="Nol di depan:" value="1" />
            </div>
            <div className="pt-[3px] pl-[9px]">
              <Check label="Angka negatif merah" />
              <Check label="Pemisah ribuan" />
            </div>
          </Section>
          <Section title="Perataan" className="h-[160px]">
            <div className="mt-2 flex pr-[5px] pl-1.5">
              <button type="button" aria-label="Kiri" className="flex h-7 w-[25px] items-center justify-center rounded-[5px] border border-[#c5c0bb] bg-[#d5d0cc]"><LineIcon rows={leftRows} y0={6} /></button>
              <Side label="Tengah"><LineIcon rows={centerRows} y0={6} /></Side>
              <Side label="Kanan"><LineIcon rows={rightRows} y0={6} /></Side>
              <Side label="Rata penuh"><LineIcon rows={fullRows} y0={6} /></Side>
              <span className="flex-1" />
              <Side label="Atas"><LineIcon rows={twoRows} y0={6} /></Side>
              <Side label="Pusat"><LineIcon rows={twoRows} y0={10} /></Side>
              <Side label="Bawah"><LineIcon rows={twoRows} y0={14} /></Side>
            </div>
            <div className="mt-2.5 flex justify-between pr-[9px] pl-1.5">
              <div className="mt-1.5 flex h-7 items-center">
                <span className="w-[43px]">Inden:</span>
                <Side label="Tambah inden"><Indent s={16} /></Side><Side label="Kurangi inden"><Indent back s={16} /></Side>
              </div>
              <div>
                <Check label="Gabung sel" muted />
                <Check label="Lipat teks" />
              </div>
            </div>
          </Section>
        </div>
        <div className="w-[11px] shrink-0 bg-[#cecece] px-[3px] pt-[5px]"><div className="h-[354px] rounded-full bg-[#7e8281]" /></div>
      </div>
    </div>
    <nav className="flex flex-1 flex-col items-center" aria-label="Dek bilah sisi">
      <button type="button" aria-label="Pengaturan" className="flex h-[33px] w-8 items-center justify-center"><Gear s={22} /></button>
      <div className="mb-[5px] h-px w-[22px] bg-[#d8d5d1]" />
      <button type="button" aria-label="Properti" className="flex size-8 items-center justify-center rounded-[3px] border border-[#b4b0ac]"><PropTab /></button>
      <button type="button" aria-label="Gaya" className="mt-[3px] flex size-8 items-center justify-center"><StylesTab /></button>
      <button type="button" aria-label="Galeri" className="mt-[3px] flex size-8 items-center justify-center"><GalleryTab /></button>
      <button type="button" aria-label="Navigator" className="mt-[3px] flex size-8 items-center justify-center"><NavTab /></button>
      <button type="button" aria-label="Fungsi" className="mt-[3px] flex size-8 items-center justify-center"><Ico><Glyph x={6} y={18} size={21} weight={500}>f</Glyph><Glyph x={17} y={21} size={12} weight={500}>(x)</Glyph></Ico></button>
    </nav>
  </aside>
);

const cell = "flex h-4 shrink-0 items-center border-l border-[#d8d5d1] whitespace-nowrap ";

const StatusBar = () => (
  <footer className="flex h-[23px] shrink-0 items-center overflow-hidden border-t border-[#b6b3b0] pt-px text-xs">
    <span className="w-[190px] shrink-0 pl-2.5">Lembar 1 dari 1</span>
    <span className={cell + "w-[238px]"} />
    <span className={cell + "w-[134px] pl-2"}>Baku</span>
    <span className={cell + "w-[159px] justify-center"}>Indonesia</span>
    <span className={cell + "w-[68px]"} />
    <span className={cell + "w-[29px] justify-center"}>
      <svg width="17" height="11" viewBox="0 0 17 11" fill="none"><path d="M1 .5h5M1 10.500h5M3.500 1v9.500M9.500 8v2h6V8" stroke="#8d9091" /></svg>
    </span>
    <span className={cell + "w-[29px] justify-center"}>
      <svg width="13" height="10" viewBox="0 0 13 10"><rect x=".5" y=".5" width="12" height="9" fill="#f4e3d3" stroke="#8fa0aa" /><path d="M5 1h3v3h2.500l-4 4.500L2.500 4H5z" fill="#f58220" stroke="#c95a05" strokeWidth=".7" /></svg>
    </span>
    <span className={cell + "w-[29px]"} />
    <span className={cell + "min-w-0 flex-1 justify-center"}>Average: ; Jumlah: 0</span>
    <div className={cell + "w-[143px] justify-between px-[9px]"}>
      <button type="button" aria-label="Perkecil"><svg width="10" height="10" viewBox="0 0 10 10" className="block"><path d="M0 5.500h10" stroke="#8d9091" /></svg></button>
      <input type="range" aria-label="Perbesaran" defaultValue={69} className="h-2.5 w-[97px] appearance-none bg-[linear-gradient(to_bottom,transparent_4px,#929595_4px,#929595_7px,transparent_7px)] [&::-webkit-slider-thumb]:size-2.5 [&::-webkit-slider-thumb]:appearance-none [&::-webkit-slider-thumb]:rounded-full [&::-webkit-slider-thumb]:border [&::-webkit-slider-thumb]:border-[#8d9091] [&::-webkit-slider-thumb]:bg-[#f6f5f4]" />
      <button type="button" aria-label="Perbesar"><svg width="10" height="10" viewBox="0 0 10 10" className="block"><path d="M0 5.500h10M5.500 0v10" stroke="#8d9091" /></svg></button>
    </div>
    <span className={cell + "w-[51px] pl-[7px]"}>200%</span>
  </footer>
);

export default function App() {
  return (
    <div className="flex h-screen flex-col overflow-hidden bg-black font-['Noto_Sans',sans-serif] text-[13px] leading-4 text-[#2e3436]">
      <TopBar />
      <div className="flex min-h-0 flex-1 flex-col overflow-hidden rounded-t-lg bg-[#f6f5f4]">
        <div className="flex h-[37px] shrink-0 items-center border-b border-[#bfb8b1] bg-linear-to-b from-[#e1dedb] to-[#dad6d2]">
          <span className="w-8" />
          <h1 className="flex-1 text-center font-semibold">Tidak Berjudul 1 - LibreOffice Calc</h1>
          <button type="button" aria-label="Tutup jendela" className="mr-[14px] flex w-[18px] justify-end"><Cross /></button>
        </div>
        <div className="flex h-[25px] shrink-0">
          <nav className="flex flex-1 items-center border-b border-[#d8d5d1] pt-0.5" aria-label="Menu">
            {menus.map((m) => <button key={m} type="button" className="px-2 whitespace-nowrap">{m}</button>)}
          </nav>
          <button type="button" aria-label="Tutup dokumen" className="mr-[14px] ml-[14px] flex items-center"><Cross /></button>
        </div>
        <StandardBar />
        <FormatBar />
        <div className="flex min-h-0 flex-1">
          <main className="flex min-w-0 flex-1 flex-col">
            <FormulaBar />
            <div className="flex min-h-0 flex-1">
              <SheetGrid />
              <div className="flex w-3 shrink-0 flex-col items-center border-t border-[#aeaeae] bg-[#cecece]">
                <div className="mt-0.5 h-0.5 w-1.5 bg-black" />
                <div className="mt-1.5 h-[229px] w-1.5 rounded-full bg-[#7e8281]" />
              </div>
            </div>
            <div className="mr-3 flex h-3 shrink-0 items-center justify-between bg-[#cecece] pr-0.5 pl-1">
              <div className="h-1.5 w-[41%] rounded-full bg-[#7e8281]" />
              <div className="h-1.5 w-0.5 bg-black" />
            </div>
            <SheetTabs />
          </main>
          <div className="mb-px flex shrink-0 border-t border-b border-l border-[#aeaeae]">
            <div className="flex w-[7px] items-center border-r border-[#aeaeae] bg-[#fafafa]">
              <button type="button" aria-label="Sembunyikan bilah sisi" className="flex h-[74px] w-full items-center bg-[#8f9292]">
                <svg width="6" height="8" viewBox="0 0 6 8"><path d="M0 0l6 4-6 4z" fill="#fff" /></svg>
              </button>
            </div>
            <Sidebar />
          </div>
        </div>
        <StatusBar />
      </div>
    </div>
  );
}
